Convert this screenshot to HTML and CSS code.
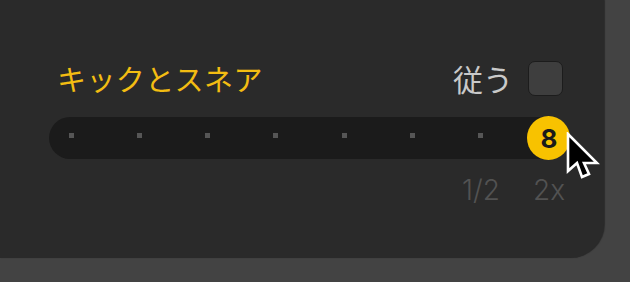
FILE: index.html
```html
<!DOCTYPE html>
<html lang="ja">
<head>
<meta charset="utf-8">
<link rel="stylesheet" href="styles.css">
</head>
<body>
<div class="panel">
  <div class="header">
    <span class="title">キックとスネア</span>
    <div class="follow">
      <span class="follow-label">従う</span>
      <span class="checkbox"></span>
    </div>
  </div>
  <div class="track">
    <span class="slot"><span class="dot"></span></span>
    <span class="slot"><span class="dot"></span></span>
    <span class="slot"><span class="dot"></span></span>
    <span class="slot"><span class="dot"></span></span>
    <span class="slot"><span class="dot"></span></span>
    <span class="slot"><span class="dot"></span></span>
    <span class="slot"><span class="dot"></span></span>
    <span class="slot"><span class="knob">8</span></span>
  </div>
  <div class="scale">
    <span class="mark">1/2</span>
    <span class="mark">2x</span>
  </div>
  <svg class="cursor" width="34" height="48" viewBox="0 0 34 48">
    <polygon points="2,2 2,39 11,31 16,45 23,42 18,31 31,31" fill="#000" stroke="#fff" stroke-width="2.6" stroke-linejoin="miter"/>
  </svg>
</div>
</body>
</html>
```

FILE: styles.css
```css
html, body {
  margin: 0;
  padding: 0;
}
body {
  background: #434343;
  width: 630px;
  height: 282px;
  overflow: hidden;
}
.panel {
  position: relative;
  width: 604px;
  height: 258px;
  background: #2a2a2a;
  border-bottom-right-radius: 34px;
  box-shadow: 1px 0 1px rgba(0,0,0,0.35);
  box-sizing: border-box;
  padding-top: 56px;
}
.header {
  display: flex;
  align-items: center;
  justify-content: space-between;
  margin-left: 57px;
  width: 506px;
  height: 44px;
}
.title {
  font-family: "Noto Sans CJK JP", sans-serif;
  font-size: 29px;
  line-height: 44px;
  color: #f3bd12;
  letter-spacing: 0.4px;
}
.follow {
  display: flex;
  align-items: center;
  gap: 15px;
}
.follow-label {
  font-family: "Noto Sans CJK JP", sans-serif;
  font-size: 30px;
  line-height: 44px;
  color: #c9c9c9;
}
.checkbox {
  width: 33px;
  height: 33px;
  background: #3e3e3e;
  border: 1px solid #1c1c1c;
  border-radius: 7px;
}
.track {
  display: flex;
  align-items: center;
  justify-content: space-between;
  margin-top: 17px;
  margin-left: 49px;
  width: 521px;
  height: 42px;
  padding-left: 1px;
  box-sizing: border-box;
  background: #1b1b1b;
  border-radius: 21px;
}
.slot {
  width: 42px;
  height: 42px;
  display: flex;
  align-items: center;
  justify-content: center;
}
.dot {
  width: 5px;
  height: 5px;
  background: #565656;
  margin-bottom: 5px;
}
.knob {
  flex: none;
  width: 43px;
  height: 44px;
  border-radius: 50%;
  background: #f8c200;
  display: flex;
  align-items: center;
  justify-content: center;
  font-family: Inter, "Liberation Sans", sans-serif;
  font-weight: 700;
  font-size: 26px;
  color: #1a1a1a;
}
.scale {
  display: flex;
  justify-content: flex-end;
  gap: 26px;
  margin-left: 49px;
  width: 521px;
  margin-top: 15px;
}
.mark {
  width: 42px;
  text-align: center;
  font-family: Inter, "Liberation Sans", sans-serif;
  font-size: 28px;
  font-weight: 300;
  line-height: 32px;
  color: #525252;
}
.cursor {
  position: absolute;
  left: 566px;
  top: 132px;
}
```
